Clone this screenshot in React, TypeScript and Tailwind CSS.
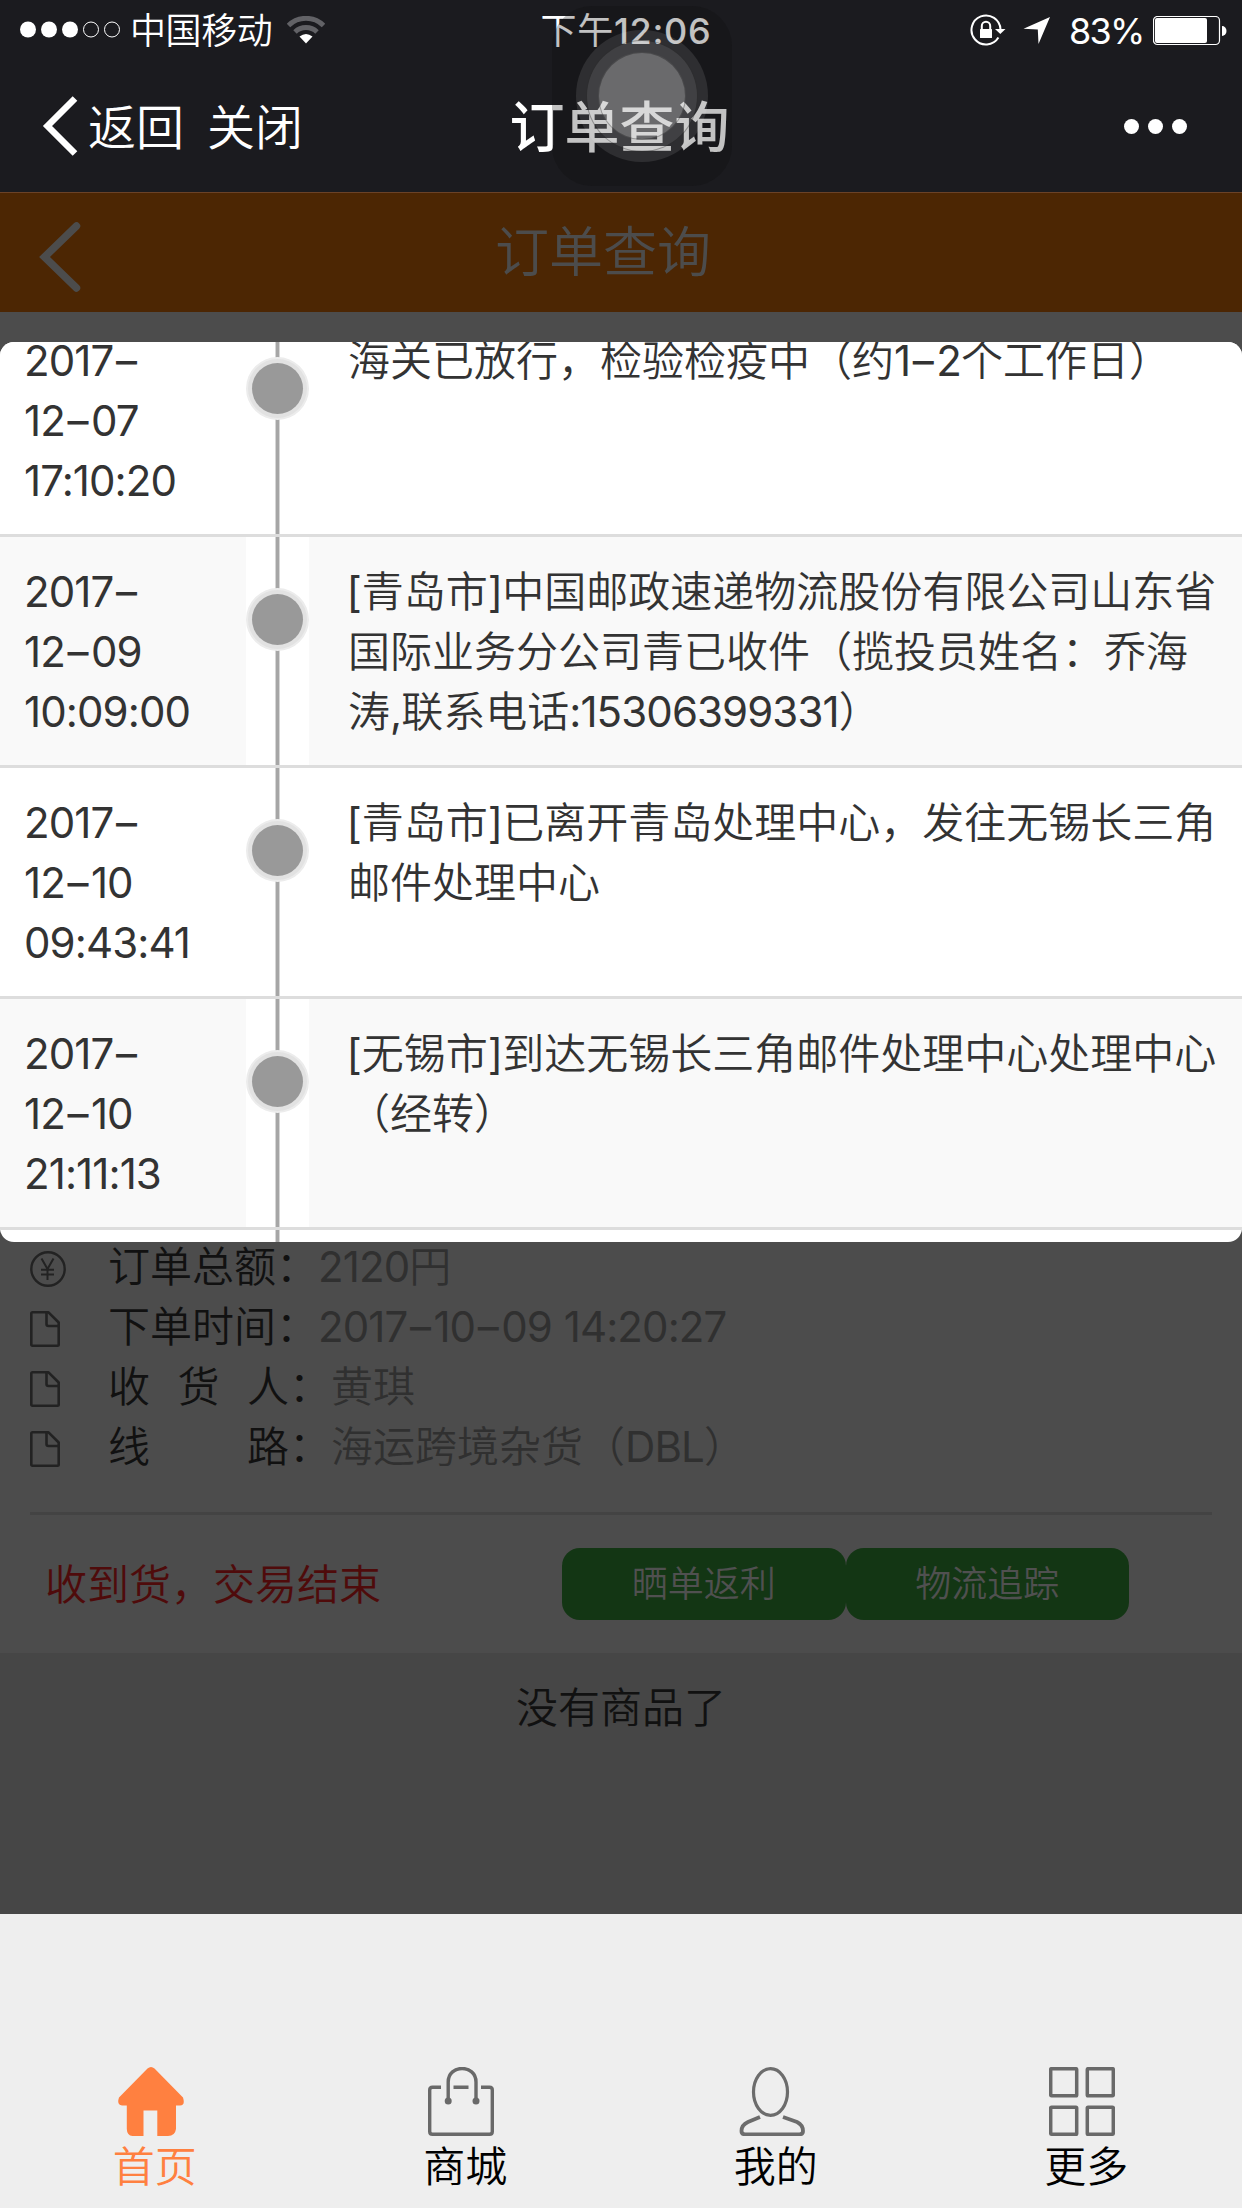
import React from "react";

const events = [
  { time: ["2017–", "12–07", "17:10:20"], text: ["海关已放行，检验检疫中（约1–2个工作日）"] },
  {
    time: ["2017–", "12–09", "10:09:00"],
    text: ["[青岛市]中国邮政速递物流股份有限公司山东省", "国际业务分公司青已收件（揽投员姓名：乔海", "涛,联系电话:15306399331）"],
  },
  { time: ["2017–", "12–10", "09:43:41"], text: ["[青岛市]已离开青岛处理中心，发往无锡长三角", "邮件处理中心"] },
  { time: ["2017–", "12–10", "21:11:13"], text: ["[无锡市]到达无锡长三角邮件处理中心处理中心", "（经转）"] },
];

/* Latin runs are set a little tighter, dashes get some air on both sides. */
function Mixed({ children }: { children: string }) {
  return (
    <>
      {children.split(/(–|\[|[\]0-9A-Z:,]+)/).map((part, i) =>
        part === "–" ? (
          <span key={i} className="px-[2.5px] font-normal">
            –
          </span>
        ) : part === "[" ? (
          <span key={i} className="-ml-[1.5px] font-normal">
            [
          </span>
        ) : /^[\]0-9A-Z:,]+$/.test(part) ? (
          <span key={i} className="font-normal tracking-[-0.9px]">
            {part}
          </span>
        ) : (
          part
        ),
      )}
    </>
  );
}

function StatusBar() {
  return (
    <div className="flex h-[60px] items-center text-[36px] leading-[60px]">
      <div className="flex w-[414px] items-center pl-5">
        <svg width="102" height="18" viewBox="0 0 102 18" className="shrink-0">
          <circle cx="8" cy="8.5" r="8" fill="#fff" />
          <circle cx="29" cy="8.5" r="8" fill="#fff" />
          <circle cx="50" cy="8.5" r="8" fill="#fff" />
          <circle cx="71" cy="8.5" r="7.5" fill="none" stroke="#fff" />
          <circle cx="92" cy="8.5" r="7.5" fill="none" stroke="#fff" />
        </svg>
        <span className="ml-[8px] pt-[2px] font-[350] tracking-[-0.4px]">中国移动</span>
        <svg width="38" height="28" viewBox="0 0 38 28" className="ml-[15px]">
          <path d="M1.5 9.5 A25 25 0 0 1 36.500 9.500" fill="none" stroke="#626266" strokeWidth="5" />
          <path d="M8 16 A16 16 0 0 1 30 16" fill="none" stroke="#626266" strokeWidth="5" />
          <path d="M12.500 20.500 Q19 15.500 25.500 20.500 L19 27.500 Z" fill="#fff" />
        </svg>
      </div>
      <div className="w-[424px] pt-[2px] text-center font-medium tracking-[0.7px]">
        <span className="font-normal">下午</span>12:06
      </div>
      <div className="flex flex-1 items-center">
        <svg width="36" height="32" viewBox="0 0 36 32" className="ml-[132px]">
          <path d="M28.400 23.500 A14.500 14.500 0 1 1 30.500 15.500" fill="none" stroke="#fff" strokeWidth="2" />
          <path d="M25 15 h10.500 l-5.200 5 Z" fill="#fff" />
          <rect x="10" y="15" width="12" height="9" rx="0.500" fill="#fff" />
          <path d="M11.800 16 v-4 a4.200 4.200 0 0 1 8.400 0 v4" fill="none" stroke="#fff" strokeWidth="2" />
        </svg>
        <svg width="28" height="28" viewBox="0 0 28 28" className="ml-[17px]">
          <path d="M27 1 L15.500 28 L14.800 13.500 L0.500 12.800 Z" fill="#fff" />
        </svg>
        <span className="ml-[18px] w-[83px] pt-[2px] tracking-[-1.8px]">83%</span>
        <svg width="74" height="30" viewBox="0 0 74 30" className="ml-[1px] mt-[2px]">
          <rect x="0.500" y="0.500" width="66" height="28" rx="4" fill="none" stroke="#fff" strokeWidth="1.200" />
          <rect x="2" y="2" width="52" height="25" rx="2" fill="#fff" />
          <path d="M69 10 a4.500 5 0 0 1 0 10 Z" fill="#fff" />
        </svg>
      </div>
    </div>
  );
}

function AssistiveTouch() {
  return (
    <div className="absolute left-[552px] top-[6px] flex size-[180px] items-center justify-center rounded-[40px] bg-[#0b0b0b]/25">
      <div className="flex size-[132px] items-center justify-center rounded-full bg-white/10">
        <div className="flex size-[112px] items-center justify-center rounded-full border border-black/30 bg-white/9">
          <div className="size-[88px] rounded-full border border-black/30 bg-white/22" />
        </div>
      </div>
    </div>
  );
}

function NavBar() {
  return (
    <div className="flex h-[132px] items-center">
      <div className="flex w-[414px] items-center pl-[42px] text-[48px] leading-[60px]">
        <svg width="36" height="60" viewBox="0 0 36 60" className="shrink-0">
          <path d="M33 2.500 L5.500 30 L33 57.500" fill="none" stroke="#fff" strokeWidth="6.500" />
        </svg>
        <span className="ml-[10px] pt-[4px] font-[350]">返回</span>
        <span className="ml-[23px] pt-[4px] font-[350]">关闭</span>
      </div>
      <div className="w-[414px] pr-[3px] pt-[2px] text-center text-[55px] font-medium leading-[60px]">订单查询</div>
      <div className="flex flex-1 justify-end gap-[9px] pr-[55px]">
        <i className="size-[15px] rounded-full bg-white" />
        <i className="size-[15px] rounded-full bg-white" />
        <i className="size-[15px] rounded-full bg-white" />
      </div>
    </div>
  );
}

function Timeline() {
  return (
    <div className="h-[900px] overflow-hidden rounded-[14px] bg-white text-[#333]">
      <div className="-mt-[36px]">
        {events.map((e, i) => (
          <div key={i} className="flex h-[231px] border-b-[3px] border-[#ddd] odd:bg-white even:bg-[#f9f9f9]">
            <div className="w-[246px] pl-[24px] pt-[25px]">
              {e.time.map((t) => (
                <div key={t}>
                  <Mixed>{t}</Mixed>
                </div>
              ))}
            </div>
            <Axis />
            <div className="whitespace-nowrap pl-[39px] pt-[25px]">
              {e.text.map((t) => (
                <div key={t}>
                  <Mixed>{t}</Mixed>
                </div>
              ))}
            </div>
          </div>
        ))}
        <div className="flex h-[231px] pl-[246px]">
          <Axis />
        </div>
      </div>
    </div>
  );
}

function Axis() {
  return (
    <svg width="63" height="228" viewBox="0 0 63 228" className="shrink-0 bg-white">
      <rect x="29" y="0" width="5" height="228" fill="#d6d6d6" />
      <rect x="30" y="0" width="3" height="228" fill="#a6a6a6" />
      <circle cx="31.500" cy="82.500" r="31.500" fill="#ececec" />
      <circle cx="31.500" cy="82.500" r="29.500" fill="#e2e2e2" />
      <circle cx="31.500" cy="82.500" r="25.500" fill="#999" />
    </svg>
  );
}

function DocIcon() {
  return (
    <svg width="30" height="36" viewBox="0 0 30 36" fill="none" stroke="#222" strokeWidth="2.600" strokeLinejoin="round">
      <path d="M1.300 2.500 Q1.300 1.300 2.500 1.300 H18.500 L28.700 11.500 V33.500 Q28.700 34.700 27.500 34.700 H2.500 Q1.300 34.700 1.300 33.500 Z" />
      <path d="M16.500 1.500 V13 Q16.500 15 18.500 15 H28.500" />
    </svg>
  );
}

function YenIcon() {
  return (
    <svg width="36" height="36" viewBox="0 0 36 36" fill="none" stroke="#222" strokeWidth="2.400">
      <circle cx="18" cy="18" r="16.700" />
      <path d="M11.500 7.500 L17.500 18 L23.500 7.500 M17.500 18 V29 M11 18.800 H24 M11 23.500 H24" strokeWidth="2" />
    </svg>
  );
}

function DetailRow({ icon, label, value }: { icon: React.ReactNode; label: React.ReactNode; value: string }) {
  return (
    <div className="flex h-[60px] items-center">
      <div className="flex w-[78px] items-center pt-[6px]">{icon}</div>
      <div className="flex pt-[2px] text-[#111]">{label}</div>
      <div className="whitespace-nowrap pt-[1px] text-[#303030]">
        <Mixed>{value}</Mixed>
      </div>
    </div>
  );
}

function OrderCard() {
  return (
    <div className="-mt-[6px] h-[417px] px-[30px]">
      <DetailRow icon={<YenIcon />} label="订单总额：" value="2120円" />
      <DetailRow icon={<DocIcon />} label="下单时间：" value="2017–10–09 14:20:27" />
      <DetailRow
        icon={<DocIcon />}
        label={
          <span className="flex gap-[27.5px]">
            <span>收</span>
            <span>货</span>
            <span>人：</span>
          </span>
        }
        value="黄琪"
      />
      <DetailRow
        icon={<DocIcon />}
        label={
          <span className="flex gap-[97px]">
            <span>线</span>
            <span>路：</span>
          </span>
        }
        value="海运跨境杂货（DBL）"
      />
      <div className="mt-[36px] h-[3px] bg-[#434343]" />
      <div className="mt-[33px] flex h-[72px] items-center">
        <div className="w-[532px] pl-[15px] pt-[2px] text-[#4f0b0b]">收到货，交易结束</div>
        <button className="h-[72px] w-[283.5px] rounded-[18px] bg-[#133614] text-[36px] leading-[60px] text-[#505050]">晒单返利</button>
        <button className="h-[72px] w-[283.5px] rounded-[18px] bg-[#133614] text-[36px] leading-[60px] text-[#505050]">物流追踪</button>
      </div>
    </div>
  );
}

const tabs = [
  {
    label: "首页",
    active: true,
    icon: (
      <svg width="66" height="69" viewBox="0 0 66 69" fill="#ff8040">
        <path d="M29.500 1.500 Q33 -1.500 36.500 1.500 L65 30.500 Q67.500 38.500 62 38.500 H58 V62 Q57 69 50 69 H39.300 V43.500 H25.500 V69 H14.500 Q9 68.500 8.800 62 V38.500 H4 Q-1.500 38 1 30.500 Z" />
      </svg>
    ),
  },
  {
    label: "商城",
    icon: (
      <svg width="66" height="69" viewBox="0 0 66 69" fill="none" stroke="#696969" strokeWidth="3.400">
        <path d="M13 20.200 H4.500 Q1.700 20.200 1.700 23 V64.500 Q1.700 67.300 4.500 67.300 H61.500 Q64.300 67.300 64.300 64.500 V23 Q64.300 20.200 61.500 20.200 H53 M25.500 20.200 H40.500" />
        <path d="M20.200 33 V15 C20.200 -3 48 -3 48 15 V33" />
        <circle cx="20.200" cy="34" r="3.500" fill="#696969" stroke="none" />
        <circle cx="48" cy="34" r="3.500" fill="#696969" stroke="none" />
      </svg>
    ),
  },
  {
    label: "我的",
    icon: (
      <svg width="66" height="69" viewBox="0 0 66 69" fill="none" stroke="#6c6c6c" strokeWidth="3.200">
        <ellipse cx="31.500" cy="25" rx="17" ry="23.300" />
        <path d="M21 50 L9 55 Q2.500 58 2.500 64 Q2.500 67.300 6 67.300 H60.500 Q64 67.300 64 64 Q64 58 58 55 L44 50" strokeWidth="3.800" />
      </svg>
    ),
  },
  {
    label: "更多",
    icon: (
      <svg width="66" height="69" viewBox="0 0 66 69" fill="none" stroke="#696969" strokeWidth="3.500">
        <rect x="1.700" y="1.700" width="26" height="27" rx="0.800" />
        <rect x="38.300" y="1.700" width="26" height="27" rx="0.800" />
        <rect x="1.700" y="40.200" width="26" height="27" rx="0.800" />
        <rect x="38.300" y="40.200" width="26" height="27" rx="0.800" />
      </svg>
    ),
  },
];

export default function App() {
  return (
    <div className="relative flex h-[2208px] w-[1242px] flex-col overflow-hidden bg-[#4c4c4c] font-['Inter','Noto_Sans_CJK_SC',sans-serif] text-[42px] font-[350] leading-[60px]">
      <header className="h-[192px] shrink-0 bg-[#1b1b1f] font-normal text-white">
        <StatusBar />
        <NavBar />
      </header>
      <AssistiveTouch />

      <div className="flex h-[120px] shrink-0 items-center border-t border-[#6b4227] bg-[#4c2603] pl-[38px]">
        <svg width="44" height="72" viewBox="0 0 44 72" className="mt-[8px]">
          <path d="M38.500 5 L6.500 36 L38.500 67" fill="none" stroke="#4c4c4c" strokeWidth="7.500" strokeLinecap="round" />
        </svg>
        <h1 className="ml-[413px] text-[54px] leading-[60px] text-[#4c4c4c]">订单查询</h1>
      </div>

      <main className="h-[1602px] shrink-0 pt-[30px]">
        <Timeline />
        <OrderCard />
        <div className="h-[261px] bg-[#464646] pt-[25px] text-center text-[#111]">没有商品了</div>
      </main>

      <nav className="flex flex-1 bg-[#eee] pt-[153px]">
        {tabs.map((t) => (
          <div key={t.label} className="flex w-[310.5px] flex-col items-center">
            <div className="mr-[9px]">{t.icon}</div>
            <div className={t.active ? "mr-[1px] pt-[1px] text-[#ff8040]" : "mr-[1px] pt-[1px] text-black"}>{t.label}</div>
          </div>
        ))}
      </nav>
    </div>
  );
}
